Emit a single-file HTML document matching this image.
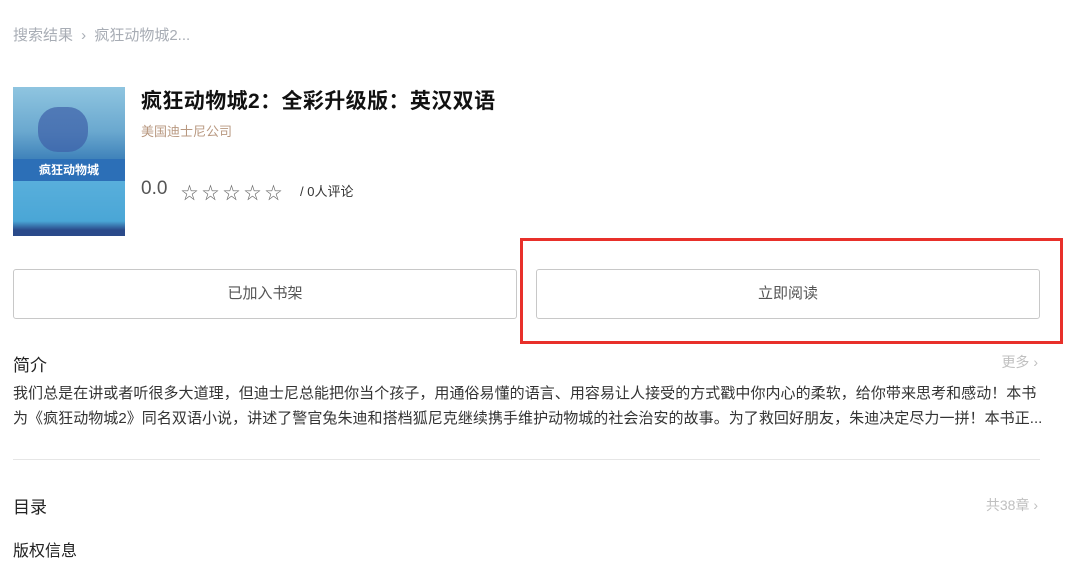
<!DOCTYPE html>
<html><head><meta charset="utf-8"><style>
*{margin:0;padding:0;box-sizing:border-box}
body{width:1080px;height:575px;background:#fff;font-family:"Liberation Sans","Noto Sans CJK SC",sans-serif;position:relative;overflow:hidden;color:#222}
.a{position:absolute;white-space:nowrap}
.btn{position:absolute;top:269px;height:50px;border:1px solid #c8c8c8;border-radius:3px;text-align:center;line-height:48px;font-size:15px;color:#555}
</style></head><body>
<div class="a" style="left:13px;top:24px;font-size:15px;color:#a8adb5">搜索结果 <span style="margin:0 4px">›</span> 疯狂动物城2...</div>
<div class="a" style="left:13px;top:87px;width:112px;height:149px;background:linear-gradient(180deg,#8fc5e0 0%,#6aa8cf 30%,#3b7fb8 50%,#5ab0dc 60%,#4aa6d6 90%,#2a4a8a 96%)">
 <div style="position:absolute;left:0;top:72px;width:112px;height:22px;background:#2c6fb7;color:#fff;font-size:12px;font-weight:bold;text-align:center;line-height:22px">疯狂动物城</div>
 <div style="position:absolute;left:25px;top:20px;width:50px;height:45px;background:#3d5fa8;border-radius:20px;opacity:.7"></div>
</div>
<div class="a" style="left:141px;top:85px;font-size:21px;letter-spacing:0.4px;font-weight:bold;color:#111">疯狂动物城2：全彩升级版：英汉双语</div>
<div class="a" style="left:141px;top:121px;font-size:13px;color:#b89880">美国迪士尼公司</div>
<div class="a" style="left:141px;top:178px;font-size:19px;color:#555">0.0</div>
<div class="a" style="left:181px;top:179px;font-size:17px;color:#666;letter-spacing:4px">☆☆☆☆☆</div>
<div class="a" style="left:300px;top:181px;font-size:13px;color:#333">/ 0人评论</div>
<div class="btn" style="left:13px;width:504px">已加入书架</div>
<div class="btn" style="left:536px;width:504px">立即阅读</div>
<div class="a" style="left:520px;top:238px;width:543px;height:106px;border:3px solid #e8302a"></div>
<div class="a" style="left:13px;top:351px;font-size:17px;color:#222">简介</div>
<div class="a" style="right:42px;top:352px;font-size:14px;color:#c0c0c0">更多 ›</div>
<div class="a" style="left:13px;top:381px;font-size:15px;letter-spacing:0.05px;line-height:25px;color:#333">我们总是在讲或者听很多大道理，但迪士尼总能把你当个孩子，用通俗易懂的语言、用容易让人接受的方式戳中你内心的柔软，给你带来思考和感动！本书</div>
<div class="a" style="left:13px;top:406px;font-size:15px;letter-spacing:0.05px;line-height:25px;color:#333;width:1030px;overflow:hidden">为《疯狂动物城2》同名双语小说，讲述了警官兔朱迪和搭档狐尼克继续携手维护动物城的社会治安的故事。为了救回好朋友，朱迪决定尽力一拼！本书正...</div>
<div class="a" style="left:13px;top:459px;width:1027px;height:1px;background:#e6e6e6"></div>
<div class="a" style="left:13px;top:493px;font-size:17px;color:#222">目录</div>
<div class="a" style="right:42px;top:495px;font-size:14px;color:#c0c0c0">共38章 ›</div>
<div class="a" style="left:13px;top:537px;font-size:16px;color:#222">版权信息</div>
</body></html>
